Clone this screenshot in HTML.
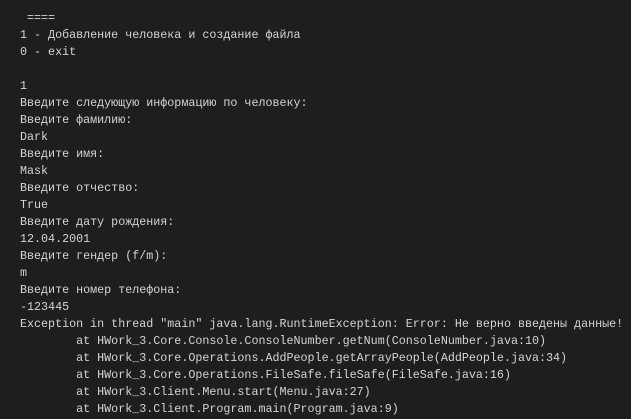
<!DOCTYPE html>
<html><head><meta charset="utf-8"><style>
html,body{margin:0;padding:0;background:#1e1e1e;width:631px;height:419px;overflow:hidden}
pre{margin:0;padding:10px 0 0 20px;font-family:"Liberation Mono","DejaVu Sans Mono",monospace;font-size:11.7px;line-height:17px;color:#d4d4d4;white-space:pre}
</style></head><body><pre> ====
1 - Добавление человека и создание файла
0 - exit

1
Введите следующую информацию по человеку:
Введите фамилию:
Dark
Введите имя:
Mask
Введите отчество:
True
Введите дату рождения:
12.04.2001
Введите гендер (f/m):
m
Введите номер телефона:
-123445
Exception in thread "main" java.lang.RuntimeException: Error: Не верно введены данные!
        at HWork_3.Core.Console.ConsoleNumber.getNum(ConsoleNumber.java:10)
        at HWork_3.Core.Operations.AddPeople.getArrayPeople(AddPeople.java:34)
        at HWork_3.Core.Operations.FileSafe.fileSafe(FileSafe.java:16)
        at HWork_3.Client.Menu.start(Menu.java:27)
        at HWork_3.Client.Program.main(Program.java:9)</pre></body></html>
